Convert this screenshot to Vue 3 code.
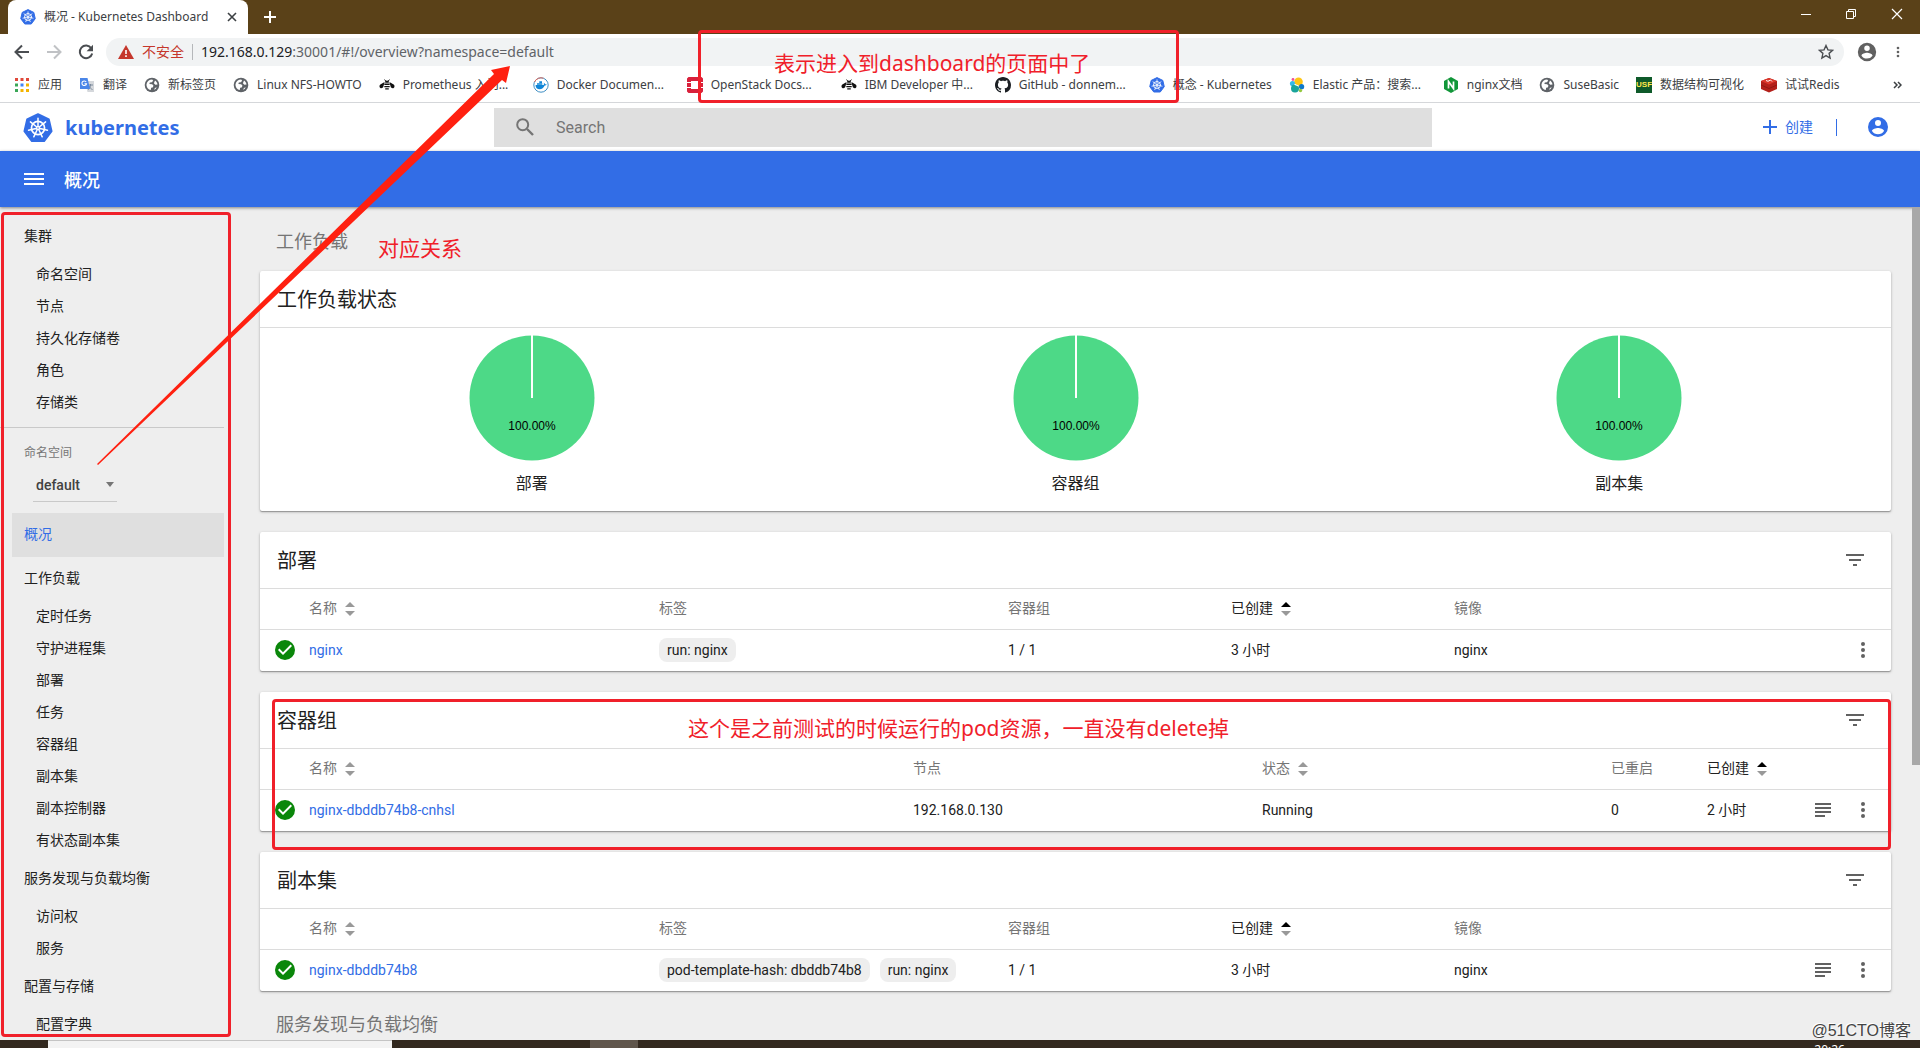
<script setup>
import { ref } from 'vue'

const bookmarks = [
  { icon: 'apps', text: '应用' },
  { icon: 'translate', text: '翻译' },
  { icon: 'globe', text: '新标签页' },
  { icon: 'globe', text: 'Linux NFS-HOWTO' },
  { icon: 'bee', text: 'Prometheus 入门...', long: true },
  { icon: 'docker', text: 'Docker Documen...', long: true },
  { icon: 'openstack', text: 'OpenStack Docs...', long: true },
  { icon: 'bee', text: 'IBM Developer 中...', long: true },
  { icon: 'github', text: 'GitHub - donnem...', long: true },
  { icon: 'kube', text: '概念 - Kubernetes' },
  { icon: 'elastic', text: 'Elastic 产品：搜索...', long: true },
  { icon: 'nginx', text: 'nginx文档' },
  { icon: 'globe', text: 'SuseBasic' },
  { icon: 'usf', text: '数据结构可视化' },
  { icon: 'redis', text: '试试Redis' },
]

const clusterItems = ['命名空间', '节点', '持久化存储卷', '角色', '存储类']
const groups = [
  { title: '工作负载', items: ['定时任务', '守护进程集', '部署', '任务', '容器组', '副本集', '副本控制器', '有状态副本集'] },
  { title: '服务发现与负载均衡', items: ['访问权', '服务'] },
  { title: '配置与存储', items: ['配置字典'] },
]

const pies = ['部署', '容器组', '副本集']

const workloadColumns = [
  { label: '名称', sort: 'idle', size: 'c-name' },
  { label: '标签', size: 'c-label' },
  { label: '容器组', size: 'c-pods' },
  { label: '已创建', sort: 'active', size: 'c-age' },
  { label: '镜像', size: 'c-rest' },
]
const podColumns = [
  { label: '名称', sort: 'idle', size: 'c-podname' },
  { label: '节点', size: 'c-label' },
  { label: '状态', sort: 'idle', size: 'c-label' },
  { label: '已重启', size: 'c-restart' },
  { label: '已创建', sort: 'active', size: 'c-rest' },
]
const tables = [
  {
    title: '部署', columns: workloadColumns, logs: false,
    row: [{ link: 'nginx' }, { chips: ['run: nginx'] }, { text: '1 / 1' }, { text: '3 小时' }, { text: 'nginx' }],
  },
  {
    title: '容器组', columns: podColumns, logs: true,
    row: [{ link: 'nginx-dbddb74b8-cnhsl' }, { text: '192.168.0.130' }, { text: 'Running' }, { text: '0' }, { text: '2 小时' }],
  },
  {
    title: '副本集', columns: workloadColumns, logs: true,
    row: [{ link: 'nginx-dbddb74b8' }, { chips: ['pod-template-hash: dbddb74b8', 'run: nginx'] }, { text: '1 / 1' }, { text: '3 小时' }, { text: 'nginx' }],
  },
]

const namespace = ref('default')
const query = ref('')
</script>

<template>
  <div class="screen">
    <svg class="defs" aria-hidden="true">
      <symbol id="kube" viewBox="0 0 32 32">
        <path d="M16 1.2 27.6 6.8 30.5 19.3 22.5 30H9.5L1.5 19.3 4.4 6.8Z" fill="#326de6" stroke="#326de6" stroke-width="2" stroke-linejoin="round" />
        <g fill="none" stroke="#fff" stroke-width="1.6" stroke-linecap="round">
          <circle cx="16" cy="16" r="7" stroke-width="1.8" />
          <path d="M16 16V5.6M16 16l8.1-6.5M16 16l10.1 2.3M16 16l4.5 9.4M16 16l-4.5 9.4M16 16 5.9 18.3M16 16 7.9 9.5" />
        </g>
        <circle cx="16" cy="16" r="2" fill="#fff" />
        <circle cx="16" cy="16" r=".8" fill="#326de6" />
      </symbol>
      <symbol id="apps" viewBox="0 0 16 16">
        <path d="M1 1h3v3H1zM6.500 1h3v3h-3zM12 1h3v3h-3z" fill="#e0483a" />
        <path d="M1 6.500h3v3H1z" fill="#3aa757" /><path d="M6.500 6.500h3v3h-3z" fill="#4285f4" /><path d="M12 6.500h3v3h-3z" fill="#f4b400" />
        <path d="M1 12h3v3H1z" fill="#3aa757" /><path d="M6.500 12h3v3h-3zM12 12h3v3h-3z" fill="#f4b400" />
      </symbol>
      <symbol id="translate" viewBox="0 0 16 16">
        <path d="M6 4h9v11H8.500z" fill="#d5d8dc" /><path d="M9 8h5M11.500 7v1c0 2-1 3.500-2.500 4.500M10 9c.5 1.500 2 3 3.500 3.500" stroke="#7b8a9c" fill="none" />
        <path d="M1 1h7.500L11 12H1z" fill="#4a86e8" /><path d="M7.200 5A2.300 2.300 0 1 0 7.500 6.800H5.500" stroke="#fff" stroke-width="1.100" fill="none" />
      </symbol>
      <symbol id="globe" viewBox="0 0 16 16">
        <circle cx="8" cy="8" r="7.300" fill="#5f6368" />
        <path d="M2.500 7.200C3.100 4.500 5.300 2.500 8.200 2.500l1 1.200-1.400 1.600-2 .3-.4 1.500 2.800.2 1.300 1.500-.8 1.700-1.600.3-.3 2.300C4.300 12.600 2.300 10.200 2.500 7.200ZM11 3.500c1.400.9 2.300 2.300 2.500 4l-2.200.3-1.400-1.600ZM10.300 12.900l.5-2 2-.6c-.5 1.100-1.400 2-2.500 2.600Z" fill="#fff" />
      </symbol>
      <symbol id="bee" viewBox="0 0 18 16">
        <path d="M6.300 4.500 1.500 7.500C.2 8.600.2 10.500 1.500 11.300c1.200.6 2.700.2 3.300-1ZM11.700 4.500l4.800 3c1.300 1.100 1.300 3 0 3.800-1.200.6-2.700.2-3.300-1Z" fill="#111" />
        <path d="M6 2 8 3.600h2L12 2" stroke="#111" fill="none" /><path d="M7 3.600h4v1.800H7zM6 6.400h6v1.600H6zM6 9h6v1.600H6zM7 11.600h4v1.500H7z" fill="#111" />
      </symbol>
      <symbol id="docker" viewBox="0 0 16 16">
        <circle cx="8" cy="8" r="7.200" fill="#fff" stroke="#3f8fc4" /><path d="M1.500 5a7.200 7.200 0 0 1 9-3.800" fill="none" stroke="#e06a5c" />
        <path d="M2.500 8h8c.6-.4.600-1.500.2-2.300.9.300 1.300 1 1.300 1.600.6-.1 1.200 0 1.700.3-.5.900-1.300 1-2 1-1 2.400-2.700 3.700-5 3.700C4 12.300 2.700 11 2.500 8Z" fill="#0f86d8" />
        <path d="M4 6.200h5.300v1.500H4zM6.300 4.300H9V6H6.300z" fill="#0f86d8" />
      </symbol>
      <symbol id="openstack" viewBox="0 0 16 16">
        <path d="M1.500 0h13L16 1.500V5h-4V4H4v1H0V1.500ZM0 11h4v1h8v-1h4v3.500L14.500 16h-13L0 14.500ZM0 6h4v4H0ZM12 6h4v4h-4Z" fill="#d9213c" />
      </symbol>
      <symbol id="github" viewBox="0 0 16 16">
        <path fill="#1b1f23" d="M8 0C3.580 0 0 3.580 0 8c0 3.540 2.290 6.530 5.470 7.590.4.070.55-.17.55-.38 0-.19-.01-.82-.01-1.490-2.010.37-2.530-.49-2.690-.94-.09-.23-.48-.94-.82-1.130-.28-.15-.68-.52-.01-.53.63-.01 1.080.58 1.230.82.720 1.210 1.870.87 2.330.66.070-.52.280-.87.510-1.070-1.780-.2-3.640-.89-3.640-3.950 0-.87.310-1.590.82-2.150-.08-.2-.36-1.020.08-2.120 0 0 .67-.21 2.200.82.640-.18 1.320-.27 2-.27s1.360.09 2 .27c1.530-1.040 2.200-.82 2.200-.82.440 1.100.16 1.920.08 2.120.51.560.82 1.270.82 2.150 0 3.070-1.870 3.750-3.650 3.950.29.250.54.730.54 1.480 0 1.070-.01 1.930-.01 2.200 0 .21.150.46.550.38A8.010 8.010 0 0 0 16 8c0-4.420-3.580-8-8-8Z" />
      </symbol>
      <symbol id="elastic" viewBox="0 0 16 16">
        <circle cx="9.500" cy="4.800" r="4.300" fill="#fec514" /><circle cx="3.500" cy="6.500" r="2.600" fill="#36b9e8" />
        <circle cx="6" cy="11.500" r="4" fill="#1aa49b" /><circle cx="12.600" cy="9.700" r="2.600" fill="#0d78c9" />
        <circle cx="11.500" cy="13.500" r="1.700" fill="#93c83e" /><circle cx="4" cy="2.500" r="1.400" fill="#ee5097" /><path d="M5.500 7.200 9.500 9" stroke="#fff" stroke-width="1.200" />
      </symbol>
      <symbol id="nginx" viewBox="0 0 16 16">
        <path d="M8 0 15 4v8l-7 4-7-4V4Z" fill="#119639" /><path d="M5.500 11.500v-7l5 7v-7" fill="none" stroke="#fff" stroke-width="1.700" />
      </symbol>
      <symbol id="redis" viewBox="0 0 16 16">
        <path d="M0 4 8 1l8 3v8l-8 3.500L0 12Z" fill="#b3201a" /><path d="M0 4 8 1l8 3-8 3.500Z" fill="#dc382c" />
        <path d="m0 8 8 3.500L16 8" fill="none" stroke="#8a1510" stroke-width=".8" /><path d="m5 3.500 2 .8L9.500 3 11 4.500" stroke="#fff" fill="none" />
      </symbol>
      <symbol id="account" viewBox="0 0 24 24">
        <path d="M12 2a10 10 0 1 0 0 20 10 10 0 0 0 0-20Zm0 3a3 3 0 1 1 0 6 3 3 0 0 1 0-6Zm0 14.200a7.200 7.200 0 0 1-6-3.220c.03-1.990 4-3.080 6-3.080s5.970 1.090 6 3.080a7.200 7.200 0 0 1-6 3.220Z" />
      </symbol>
      <symbol id="dots" viewBox="0 0 24 24">
        <circle cx="12" cy="6" r="2" /><circle cx="12" cy="12" r="2" /><circle cx="12" cy="18" r="2" />
      </symbol>
      <symbol id="filter" viewBox="0 0 24 24"><path d="M10 18h4v-2h-4zM3 6v2h18V6zm3 7h12v-2H6z" /></symbol>
      <symbol id="logs" viewBox="0 0 24 24"><path d="M4 5h16v2H4zM4 9h16v2H4zM4 13h16v2H4zM4 17h10v2H4z" /></symbol>
      <symbol id="ok" viewBox="0 0 24 24"><path d="M12 2a10 10 0 1 0 0 20 10 10 0 0 0 0-20Zm-2 15-5-5 1.410-1.410L10 14.170l7.590-7.590L19 8Z" /></symbol>
    </svg>

    <header class="tabs">
      <div class="tab">
        <svg class="i16"><use href="#kube" /></svg>
        <span class="tab-title">概况 - Kubernetes Dashboard</span>
        <button class="plain" aria-label="关闭标签页"><svg width="10" height="10" viewBox="0 0 10 10"><path d="M1 1l8 8M9 1 1 9" stroke="#3c4043" stroke-width="1.600" /></svg></button>
      </div>
      <button class="plain new-tab" aria-label="新标签页"><svg width="12" height="12" viewBox="0 0 12 12"><path d="M6 0v12M0 6h12" stroke="#fff" stroke-width="2" /></svg></button>
      <div class="win">
        <button class="plain" aria-label="最小化"><svg width="10" height="12" viewBox="0 0 10 12"><path d="M0 6.500h10" stroke="#fff" /></svg></button>
        <button class="plain" aria-label="还原"><svg width="10" height="10" viewBox="0 0 10 10"><path d="M.5 2.500h7v7h-7zM2.500 2.500v-2h7v7h-2" fill="none" stroke="#fff" /></svg></button>
        <button class="plain" aria-label="关闭"><svg width="12" height="12" viewBox="0 0 12 12"><path d="M1 1l10 10M11 1 1 11" stroke="#fff" stroke-width="1.200" /></svg></button>
      </div>
    </header>

    <div class="toolbar">
      <div class="history">
        <button class="plain" aria-label="后退"><svg width="16" height="16" viewBox="0 0 16 16"><path d="M15 8H2M8 1.500 1.500 8 8 14.500" fill="none" stroke="#4a4d51" stroke-width="2" /></svg></button>
        <button class="plain" aria-label="前进"><svg width="16" height="16" viewBox="0 0 16 16"><path d="M1 8h13M8 1.500 14.500 8 8 14.500" fill="none" stroke="#c0c2c5" stroke-width="2" /></svg></button>
        <button class="plain" aria-label="刷新"><svg width="16" height="16" viewBox="0 0 16 16"><path d="M13.300 4.300A6.300 6.300 0 1 0 14.200 9.500" fill="none" stroke="#4a4d51" stroke-width="2" /><path d="M15 .8v6.400H8.600Z" fill="#4a4d51" /></svg></button>
      </div>
      <div class="address">
        <svg width="16" height="14" viewBox="0 0 16 14"><path d="M8 0l8 14H0Z" fill="#c5372c" /><path d="M7.200 5h1.600v4H7.200zM7.200 10.300h1.600v1.700H7.200z" fill="#fff" /></svg>
        <span class="unsafe">不安全</span>
        <span class="url"><b>192.168.0.129</b>:30001/#!/overview?namespace=default</span>
        <button class="plain star" aria-label="收藏"><svg width="16" height="16" viewBox="0 0 14 14"><path d="M7 1.300l1.700 3.800 4.100.4-3.100 2.700.9 4.100L7 10.200l-3.600 2.100.9-4.100L1.200 5.500l4.100-.4Z" fill="none" stroke="#4a4d51" stroke-width="1.200" /></svg></button>
      </div>
      <button class="plain" aria-label="用户"><svg class="i22 gray"><use href="#account" /></svg></button>
      <button class="plain" aria-label="菜单"><svg class="i16 gray"><use href="#dots" /></svg></button>
    </div>

    <nav class="bookmarks">
      <a v-for="b in bookmarks" :key="b.text" href="#" :class="['bookmark', { long: b.long }]">
        <span v-if="b.icon === 'usf'" class="usf">USF</span>
        <svg v-else class="i16"><use :href="'#' + b.icon" /></svg>
        <span class="b-text">{{ b.text }}</span>
      </a>
      <button class="plain more" aria-label="更多书签"><svg width="9" height="8" viewBox="0 0 9 8"><path d="M1 1l3 3-3 3M5 1l3 3-3 3" fill="none" stroke="#3c4043" stroke-width="1.500" /></svg></button>
    </nav>

    <header class="brandbar">
      <a href="#" class="brand"><svg class="i30"><use href="#kube" /></svg>kubernetes</a>
      <label class="search">
        <svg width="18" height="18" viewBox="0 0 18 18"><circle cx="6.700" cy="6.700" r="5.500" fill="none" stroke="#757575" stroke-width="2" /><path d="M11 11l6 6" stroke="#757575" stroke-width="2.400" /></svg>
        <input v-model="query" type="text" placeholder="Search" aria-label="Search">
      </label>
      <div class="actions">
        <button class="plain create"><svg width="14" height="14" viewBox="0 0 14 14"><path d="M7 0v14M0 7h14" stroke="#326de6" stroke-width="2" /></svg>创建</button>
        <i class="bar"></i>
        <button class="plain" aria-label="账户"><svg class="i24 blue"><use href="#account" /></svg></button>
      </div>
    </header>

    <div class="titlebar">
      <button class="plain" aria-label="导航"><svg width="20" height="12" viewBox="0 0 20 12"><path d="M0 1h20M0 6h20M0 11h20" stroke="#fff" stroke-width="2" /></svg></button>
      <h1>概况</h1>
    </div>

    <div class="body">
      <nav class="sidebar">
        <a href="#" class="group">集群</a>
        <a v-for="i in clusterItems" :key="i" href="#" class="item">{{ i }}</a>
        <div class="namespace">
          <label for="ns">命名空间</label>
          <div class="picker">
            <select id="ns" v-model="namespace"><option>default</option></select>
            <svg width="8" height="5" viewBox="0 0 8 5"><path d="M0 0h8L4 5Z" fill="#757575" /></svg>
          </div>
        </div>
        <a href="#" class="group active">概况</a>
        <template v-for="g in groups" :key="g.title">
          <a href="#" class="group">{{ g.title }}</a>
          <a v-for="i in g.items" :key="i" href="#" class="item">{{ i }}</a>
        </template>
      </nav>

      <main class="content">
        <h2 class="section">工作负载</h2>
        <section class="card">
          <div class="card-head"><h3>工作负载状态</h3></div>
          <div class="pies">
            <figure v-for="p in pies" :key="p">
              <svg width="126" height="126" viewBox="0 0 126 126">
                <circle cx="63" cy="63" r="62.500" fill="#4dd987" />
                <path d="M63 0v63" stroke="#fff" stroke-width="2" />
                <text x="63" y="95" text-anchor="middle">100.00%</text>
              </svg>
              <figcaption>{{ p }}</figcaption>
            </figure>
          </div>
        </section>

        <section v-for="t in tables" :key="t.title" class="card">
          <div class="card-head">
            <h3>{{ t.title }}</h3>
            <button class="plain" aria-label="筛选"><svg class="i24 gray"><use href="#filter" /></svg></button>
          </div>
          <table>
            <thead>
              <tr>
                <th class="c-icon"></th>
                <th v-for="c in t.columns" :key="c.label" :class="[c.size, c.sort]">
                  {{ c.label }}<svg v-if="c.sort" class="sort" width="10" height="14" viewBox="0 0 10 14"><path class="up" d="M0 5h10L5 0Z" /><path d="M0 9h10l-5 5Z" fill="#999" /></svg>
                </th>
                <th class="c-actions"></th>
              </tr>
            </thead>
            <tbody>
              <tr>
                <td class="c-icon"><svg class="i24 green"><use href="#ok" /></svg></td>
                <td v-for="(cell, n) in t.row" :key="n">
                  <a v-if="cell.link" href="#">{{ cell.link }}</a>
                  <div v-else-if="cell.chips" class="chips"><span v-for="c in cell.chips" :key="c" class="chip">{{ c }}</span></div>
                  <template v-else>{{ cell.text }}</template>
                </td>
                <td class="c-actions">
                  <div class="row-actions">
                    <button v-if="t.logs" class="plain" aria-label="日志"><svg class="i24 gray"><use href="#logs" /></svg></button>
                    <button class="plain" aria-label="操作"><svg class="i24 gray"><use href="#dots" /></svg></button>
                  </div>
                </td>
              </tr>
            </tbody>
          </table>
        </section>
        <h2 class="section">服务发现与负载均衡</h2>
      </main>
      <div class="scroll"><i></i></div>
      <div class="watermark">@51CTO博客</div>
    </div>

    <footer class="taskbar">
      <i class="task-search"></i><i class="task-app"></i><span class="clock">20:26</span>
    </footer>

    <div class="mark mark-side"></div>
    <div class="mark mark-url">表示进入到dashboard的页面中了</div>
    <div class="mark mark-pods">这个是之前测试的时候运行的pod资源，一直没有delete掉</div>
    <div class="note">对应关系</div>
    <svg class="arrow" width="440" height="410" viewBox="0 0 440 410"><path d="M17 398 414 8l-3-4 19-4-4 17-4-3L18 399Z" fill="#ff2010" /></svg>
  </div>
</template>

<style>
body { overflow: hidden; }
</style>

<style scoped>
.screen { position: relative; display: flex; flex-direction: column; height: 100vh; overflow: hidden; background: #eee; color: #212121; font: 14px/20px Roboto, "Noto Sans CJK SC", sans-serif; }
.screen * { box-sizing: border-box; }
.defs { position: absolute; width: 0; height: 0; }
h1, h2, h3, figure { margin: 0; font-weight: 400; }
a { color: inherit; text-decoration: none; }
svg { display: block; flex: none; }
.plain { display: flex; align-items: center; justify-content: center; padding: 0; border: 0; background: none; color: inherit; font: inherit; }
.i16 { width: 16px; height: 16px; }
.i22 { width: 22px; height: 22px; }
.i24 { width: 24px; height: 24px; }
.i30 { width: 30px; height: 30px; }
.gray { fill: #616161; }
.blue { fill: #326de6; }
.green { fill: #0a870a; }

.tabs, .toolbar, .bookmarks { flex: none; display: flex; align-items: center; font-family: "Noto Sans", "Noto Sans CJK SC", sans-serif; }
.tabs { height: 34px; padding-left: 8px; background: #5a4118; }
.tab { display: flex; align-items: center; gap: 8px; width: 240px; height: 34px; padding: 0 11px 0 12px; border-radius: 8px 8px 0 0; background: #fff; font-size: 12px; white-space: nowrap; }
.tab-title { flex: 1; color: #3c4043; }
.new-tab { margin-left: 16px; }
.win { display: flex; gap: 35px; margin-left: auto; padding: 0 17px 6px 0; }
.toolbar { height: 36px; gap: 12px; padding: 0 14px; background: #fff; }
.history { display: flex; gap: 16px; }
.address { flex: 1; display: flex; align-items: center; gap: 8px; height: 28px; padding: 0 10px 0 12px; border-radius: 14px; background: #f1f3f4; font-size: 14px; color: #5f6368; white-space: nowrap; }
.unsafe { padding-right: 8px; border-right: 1px solid #b5b7ba; color: #c5372c; line-height: 16px; }
.url b { color: #202124; font-weight: 400; }
.star { margin-left: auto; }
.bookmarks { height: 33px; gap: 17px; padding: 0 18px 2px 14px; border-bottom: 1px solid #d5d7da; background: #fff; color: #3c4043; font-size: 12px; white-space: nowrap; }
.bookmark { display: flex; align-items: center; gap: 8px; }
.long .b-text { width: 113px; }
.more { margin-left: auto; }
.usf { width: 16px; height: 16px; background: #0e5a2a; color: #ffe94a; font: 700 8px/16px "Liberation Sans", sans-serif; text-align: center; }

.brandbar { flex: none; display: grid; grid-template-columns: 1fr 49% 1fr; align-items: center; height: 48px; padding-left: 6px; background: #fff; }
.brand { display: flex; align-items: center; gap: 12px; padding: 2px 0 0 17px; color: #326de6; font: 700 20px/24px "Noto Sans", sans-serif; }
.search { display: flex; align-items: center; gap: 22px; height: 39px; padding: 0 22px; background: #dfdfdf; }
.search input { flex: 1; min-width: 0; padding: 2px 0 0; border: 0; outline: 0; background: none; color: #212121; font: 16px/20px Roboto, sans-serif; }
.search input::placeholder { color: #757575; opacity: 1; }
.actions { display: flex; align-items: center; justify-content: flex-end; gap: 23px; padding-right: 30px; color: #326de6; }
.create { gap: 8px; }
.bar { width: 1px; height: 17px; margin-right: 6px; background: #326de6; }
.titlebar { position: relative; flex: none; display: flex; align-items: center; gap: 20px; height: 56px; padding-left: 24px; background: #326de6; box-shadow: 0 1px 3px rgba(0, 0, 0, .45); color: #fff; }
.titlebar h1 { padding-top: 3px; font-size: 18px; font-weight: 500; line-height: 24px; }

.body { position: relative; flex: 1; min-height: 0; display: flex; overflow: hidden; }
.sidebar { flex: none; display: flex; flex-direction: column; width: 224px; padding-top: 8px; }
.group, .item { flex: none; height: 44px; margin-left: 12px; padding-left: 12px; line-height: 42px; }
.item { height: 32px; padding-left: 24px; line-height: 30px; }
.active { background: #dfdfdf; color: #326de6; }
.namespace { flex: none; height: 86px; margin-top: 8px; padding: 15px 0 0 24px; border-top: 1px solid #c9c9c9; color: #757575; font-size: 12px; }
.namespace label { display: block; line-height: 20px; }
.picker { display: flex; align-items: center; width: 84px; height: 34px; margin: 5px 0 0 9px; padding: 0 3px; border-bottom: 1px solid #c9c9c9; }
.picker select { flex: 1; padding: 0; border: 0; outline: 0; appearance: none; background: none; color: #424242; font: 500 14px/20px Roboto, sans-serif; }

.content { flex: 1; min-width: 0; padding: 22px 21px 0 36px; }
.section { padding: 1px 0 0 16px; height: 42px; color: #757575; font-size: 18px; line-height: 24px; }
.card { margin-bottom: 21px; border-radius: 2px; background: #fff; box-shadow: 0 1px 3px rgba(0, 0, 0, .25), 0 1px 1px rgba(0, 0, 0, .25); }
.card-head { display: flex; align-items: center; justify-content: space-between; height: 56px; padding: 0 24px 0 17px; }
.card-head h3 { padding-top: 2px; font-size: 20px; line-height: 28px; }
.pies { display: flex; height: 184px; padding-top: 7px; border-top: 1px solid #dcdcdc; }
.pies figure { flex: 1; display: flex; flex-direction: column; align-items: center; }
.pies text { fill: #000; font: 12px "Liberation Sans", sans-serif; }
.pies figcaption { margin-top: 11px; font-size: 16px; line-height: 24px; }

table { width: 100%; border-spacing: 0; table-layout: fixed; white-space: nowrap; }
th, td { height: 41px; padding: 0 0 2px; border-top: 1px solid #dcdcdc; font-weight: 400; text-align: left; vertical-align: middle; }
td { height: 42px; }
th { color: #757575; }
th.active { background: none; color: #212121; }
td a { color: #326de6; }
.c-icon { width: 49px; padding-left: 13px; }
.c-name { width: 350px; }
.c-label { width: 349px; }
.c-pods, .c-age { width: 223px; }
.c-podname { width: 604px; }
.c-restart { width: 96px; }
.c-rest { width: auto; }
.c-actions { width: 92px; }
.sort { display: inline-block; margin-left: 8px; vertical-align: -3px; }
.sort .up { fill: #999; }
.active .up { fill: #000; }
.chips { display: flex; gap: 10px; }
.chip { height: 24px; padding: 0 8px; border-radius: 8px; background: #eee; line-height: 24px; }
.row-actions { display: flex; justify-content: flex-end; gap: 16px; padding-right: 16px; }

.scroll { flex: none; width: 8px; background: #eee; }
.scroll i { display: block; height: 67%; background: #a8a8a8; }
.watermark { position: absolute; right: 9px; bottom: 0; color: #444; font: 16px/18px "Liberation Sans", "Noto Sans CJK SC", sans-serif; text-shadow: -1px -1px 0 #fff; }
.taskbar { flex: none; display: flex; height: 8px; padding-left: 48px; overflow: hidden; background: #33291f; }
.task-search { width: 344px; border-top: 1px solid #c4c4c4; background: #f3f3f3; }
.task-app { width: 48px; margin-left: 198px; background: #60564c; }
.clock { margin: 3px 75px 0 auto; color: #fff; font: 12px/14px "Noto Sans", sans-serif; }

.mark, .note { position: absolute; color: #f0202a; font: 21px/28px "Noto Sans", "Noto Sans CJK SC", sans-serif; white-space: nowrap; }
.mark { border: 3px solid #f0202a; border-radius: 4px; }
.mark-side { left: 1px; top: 212px; bottom: 11px; width: 230px; }
.mark-url { left: 698px; top: 30px; width: 481px; height: 73px; padding: 16px 0 0 73px; }
.mark-pods { left: 272px; right: 29px; top: 699px; height: 151px; padding: 12px 0 0 413px; }
.note { left: 378px; top: 234px; }
.arrow { position: absolute; left: 80px; top: 66px; }
</style>
